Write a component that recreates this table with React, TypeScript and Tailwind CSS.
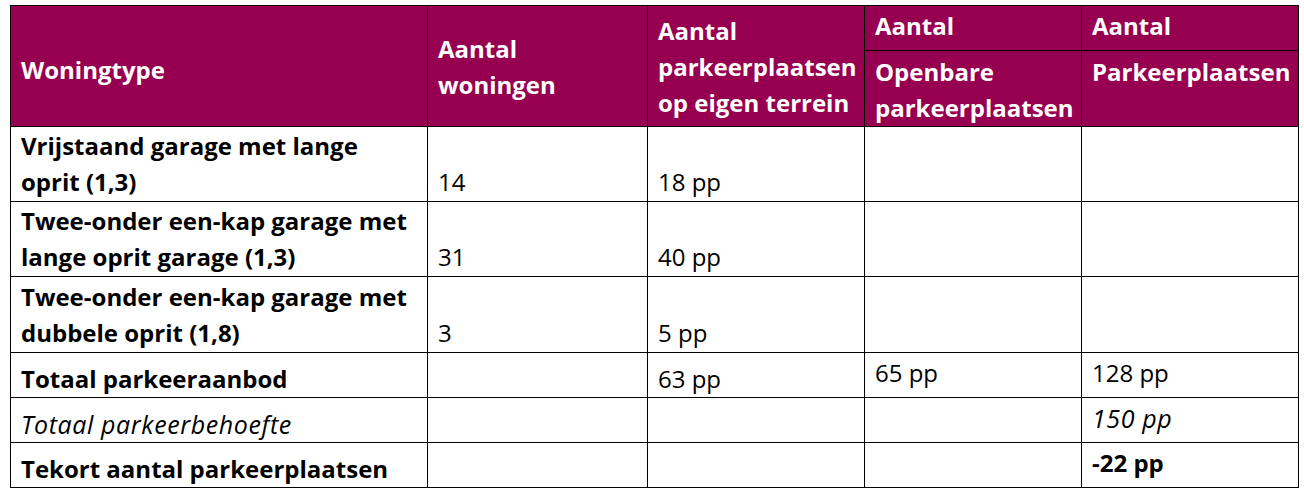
const rows = [
  { label: ['Vrijstaand garage met lange', 'oprit (1,3)'], count: '14', own: '18 pp', h: 'h-[75px]' },
  { label: ['Twee-onder een-kap garage met', 'lange oprit garage (1,3)'], count: '31', own: '40 pp', h: 'h-[75px]' },
  { label: ['Twee-onder een-kap garage met', 'dubbele oprit (1,8)'], count: '3', own: '5 pp', h: 'h-[76px]' },
]

export default function App() {
  const th = 'border border-black bg-[#970050] text-white font-bold px-[10px] text-left'
  const td = 'border border-black px-[10px] align-bottom'
  const it = 'italic text-[25px] tracking-[0.6px]'

  return (
    <div className="min-h-screen bg-white pt-[5px] pl-[10px] font-['Open_Sans','Lato',sans-serif] text-[24px] leading-[36px] text-black">
      <table className="table-fixed border-collapse w-[1288px]">
        <colgroup>
          <col className="w-[417px]" />
          <col className="w-[220px]" />
          <col className="w-[217px]" />
          <col className="w-[217px]" />
          <col className="w-[217px]" />
        </colgroup>
        <thead>
          <tr className="h-[45px]">
            <th rowSpan={2} className={`${th} align-middle pt-[8px]`}>Woningtype</th>
            <th rowSpan={2} className={`${th} align-middle pt-[2px]`}>
              Aantal
              <br />
              woningen
            </th>
            <th rowSpan={2} className={`${th} align-middle pt-[2px]`}>
              Aantal
              <br />
              parkeerplaatsen
              <br />
              op eigen terrein
            </th>
            <th className={`${th} align-top pt-[2px]`}>Aantal</th>
            <th className={`${th} align-top pt-[2px]`}>Aantal</th>
          </tr>
          <tr className="h-[76px]">
            <th className={`${th} align-top pt-[3px]`}>
              Openbare
              <br />
              parkeerplaatsen
            </th>
            <th className={`${th} align-top pt-[3px]`}>Parkeerplaatsen</th>
          </tr>
        </thead>
        <tbody>
          {rows.map((r) => (
            <tr key={r.label[0] + r.count} className={r.h}>
              <td className={`${td} pb-[1px] font-bold`}>
                {r.label[0]}
                <br />
                {r.label[1]}
              </td>
              <td className={`${td} pb-[1px]`}>{r.count}</td>
              <td className={`${td} pb-[1px]`}>{r.own}</td>
              <td className={td}></td>
              <td className={td}></td>
            </tr>
          ))}
          <tr className="h-[45px]">
            <td className={`${td} font-bold`}>Totaal parkeeraanbod</td>
            <td className={td}></td>
            <td className={td}>63 pp</td>
            <td className={`${td} !align-top pt-[2px]`}>65 pp</td>
            <td className={`${td} !align-top pt-[2px]`}>128 pp</td>
          </tr>
          <tr className="h-[45px]">
            <td className={`${td} ${it}`}>Totaal parkeerbehoefte</td>
            <td className={td}></td>
            <td className={td}></td>
            <td className={td}></td>
            <td className={`${td} ${it} !align-top pt-[2px]`}>150 pp</td>
          </tr>
          <tr className="h-[45px]">
            <td className={`${td} font-bold`}>Tekort aantal parkeerplaatsen</td>
            <td className={td}></td>
            <td className={td}></td>
            <td className={td}></td>
            <td className={`${td} font-bold !align-top pt-[2px]`}>-22 pp</td>
          </tr>
        </tbody>
      </table>
    </div>
  )
}
